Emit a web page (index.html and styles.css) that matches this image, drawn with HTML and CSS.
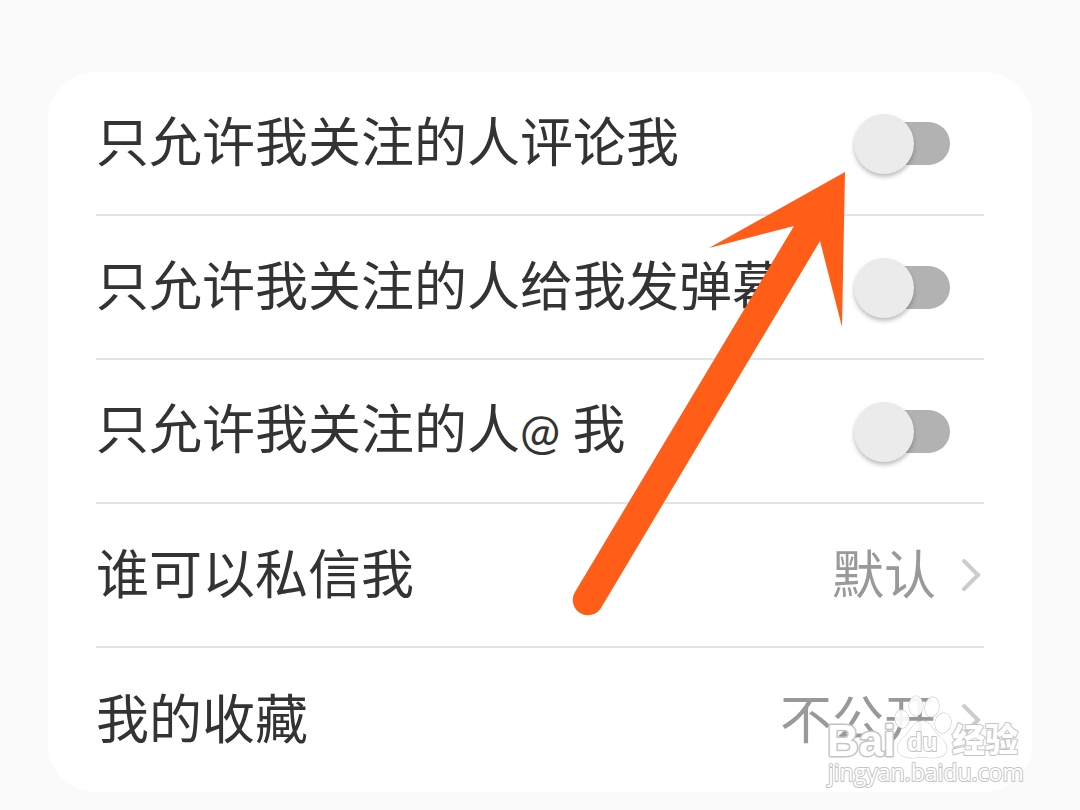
FILE: index.html
```html
<!DOCTYPE html>
<html lang="zh-CN">
<head>
  <meta charset="UTF-8">
  <meta name="viewport" content="width=device-width, initial-scale=1.0">
  <title>隐私设置</title>
  <link rel="stylesheet" href="styles.css">
</head>
<body>
  <main class="card">
    <div class="row">
      <label class="title" for="comment">只允许我关注的人评论我</label>
      <input class="switch" type="checkbox" id="comment">
    </div>
    <div class="row">
      <label class="title" for="danmu">只允许我关注的人给我发弹幕</label>
      <input class="switch" type="checkbox" id="danmu">
    </div>
    <div class="row">
      <label class="title" for="mention">只允许我关注的人<span class="at">@ </span>我</label>
      <input class="switch" type="checkbox" id="mention">
    </div>
    <a class="row" href="#message">
      <span class="title">谁可以私信我</span>
      <span class="value">
        <span class="state">默认</span>
        <svg class="chevron" viewBox="0 0 24 36"><path d="M4 4 L18 18 L4 32"/></svg>
      </span>
    </a>
    <a class="row last" href="#favorites">
      <span class="title">我的收藏</span>
      <span class="value">
        <span class="state">不公开</span>
        <svg class="chevron" viewBox="0 0 24 36"><path d="M4 4 L18 18 L4 32"/></svg>
      </span>
    </a>

    <!-- pointer to the first switch -->
    <svg class="arrow" viewBox="0 0 280 450">
      <path d="M275 2 L272 157 L250 71 L31 438 A15 15 0 0 1 5 422 L224 56 L139 78 Z"/>
    </svg>

    <svg class="watermark" viewBox="0 0 200 96">
      <text class="brand" x="3" y="60">Bai</text>
      <g class="paw">
        <ellipse cx="78" cy="23" rx="7" ry="9" transform="rotate(-8 78 23)"/>
        <ellipse cx="92" cy="10" rx="7" ry="10"/>
        <ellipse cx="108" cy="11" rx="7" ry="10" transform="rotate(10 108 11)"/>
        <ellipse cx="119" cy="27" rx="8" ry="10" transform="rotate(12 119 27)"/>
        <path d="M98 25 C89 25 87 35 81 40 C71 48 71 59 82 61 C89 63 92 61 98 61 C104 61 108 63 115 61 C126 59 125 48 115 40 C109 35 107 25 98 25 Z"/>
      </g>
      <text class="du" x="83" y="55">du</text>
      <text class="name" x="128" y="56">经验</text>
      <text class="site" x="4" y="85">jingyan.baidu.com</text>
    </svg>
  </main>
</body>
</html>
```

FILE: styles.css
```css
* {
  box-sizing: border-box;
}
body {
  margin: 0;
  padding: 72px 48px 18px;
  background-color: #fafafa;
  color: #333;
  font-family: Lato, "Noto Sans CJK SC", sans-serif;
  font-size: 52px;
  line-height: 72px;
}
.card {
  position: relative;
  padding: 0 48px;
  background: #fff;
  border-radius: 48px;
}
.row {
  display: flex;
  align-items: center;
  justify-content: space-between;
  height: 144px;
  border-bottom: 2px solid #e4e4e4;
  color: inherit;
  text-decoration: none;
  white-space: nowrap;
}
.row.last {
  border-bottom: none;
}
.title {
  padding-bottom: 2px;
  font-size: 53px;
}
.at {
  font-size: 48px;
}
.value {
  display: flex;
  align-items: center;
  gap: 24px;
  color: #999;
}
.state {
  padding-bottom: 2px;
}
.chevron {
  width: 24px;
  height: 36px;
  fill: none;
  stroke: #ccc;
  stroke-width: 4;
  stroke-linecap: round;
}

/* switches */
.switch {
  appearance: none;
  position: relative;
  width: 92px;
  height: 43px;
  margin: 0 34px 0 0;
  border-radius: 22px;
  background: #b2b2b2;
  cursor: pointer;
}
.switch::before {
  content: "";
  position: absolute;
  top: -8px;
  left: -4px;
  width: 60px;
  height: 60px;
  border-radius: 50%;
  background: #ebebeb;
  box-shadow: 0 3px 4px rgba(0, 0, 0, 0.25);
}
.switch:checked::before {
  left: 36px;
}

.arrow {
  position: absolute;
  top: 98px;
  right: 182px;
  width: 280px;
  height: 450px;
  fill: #ff5d18;
  pointer-events: none;
}
.watermark {
  position: absolute;
  right: 8px;
  bottom: 0;
  width: 200px;
  height: 96px;
  overflow: visible;
  fill: #fff;
  stroke: #c4c4c4;
  stroke-width: 2;
  stroke-linejoin: round;
  paint-order: stroke;
  pointer-events: none;
}
.paw {
  fill-opacity: 0.9;
  stroke-width: 1;
}
.brand {
  font: bold 44px "Liberation Sans", sans-serif;
  stroke-width: 3;
}
.du {
  font: bold 25px "Liberation Sans", sans-serif;
}
.name {
  font: 900 33px "Noto Sans CJK SC", sans-serif;
}
.site {
  font: 23px "Open Sans", sans-serif;
}
```
